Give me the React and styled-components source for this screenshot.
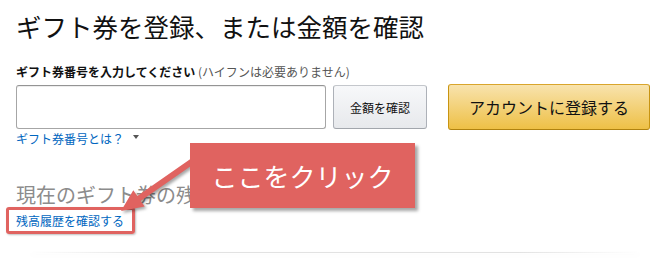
import React from "react";
import styled, { createGlobalStyle } from "styled-components";

const GlobalStyle = createGlobalStyle`
  html, body {
    margin: 0;
    padding: 0;
    background: #fff;
  }
  body {
    font-family: "Noto Sans CJK JP", "Noto Sans", sans-serif;
    color: #111;
  }
`;

export default function App() {
  return (
    <Page>
      <GlobalStyle />
      <Title>ギフト券を登録、または金額を確認</Title>
      <Label>
        <strong>ギフト券番号を入力してください</strong>
        <Hint> (ハイフンは必要ありません)</Hint>
      </Label>
      <FormRow>
        <CodeInput type="text" />
        <Button>金額を確認</Button>
        <PrimaryButton>アカウントに登録する</PrimaryButton>
      </FormRow>
      <HelpLink>
        ギフト券番号とは？<Caret />
      </HelpLink>
      <BalanceHeading>現在のギフト券の残高</BalanceHeading>
      <Highlight>
        <TextLink>残高履歴を確認する</TextLink>
      </Highlight>
      <Divider />

      <Arrow width="670" height="261" viewBox="0 0 670 261">
        <polygon points="201.7,158.5 140.7,200.9 144.7,206.6 121,211 133.3,190.2 137.3,195.9 198.3,153.5" />
      </Arrow>
      <Callout>ここをクリック</Callout>
    </Page>
  );
}

const Page = styled.div`
  position: relative;
  width: 670px;
  height: 261px;
  padding: 0 16px;
  box-sizing: border-box;
  overflow: hidden;
`;

const Title = styled.h1`
  margin: 0;
  padding-top: 11px;
  font-size: 25.5px;
  line-height: 30px;
  font-weight: 400;
  color: #111;
`;

const Label = styled.div`
  margin-top: 23px;
  font-size: 12px;
  line-height: 16px;
  color: #111;

  strong {
    font-weight: 700;
  }
`;

const Hint = styled.span`
  color: #555;
`;

const FormRow = styled.div`
  display: flex;
  align-items: center;
  margin-top: 4px;
  height: 46px;
`;

const CodeInput = styled.input`
  width: 310px;
  height: 44px;
  box-sizing: border-box;
  border: 1px solid #a6a6a6;
  border-top-color: #949494;
  border-radius: 3px;
  box-shadow: 0 1px 0 rgba(255, 255, 255, 0.5), 0 1px 0 rgba(0, 0, 0, 0.07) inset;
  outline: none;
`;

const Button = styled.button`
  margin-left: 7px;
  width: 94px;
  height: 44px;
  box-sizing: border-box;
  border: 1px solid #adb1b8;
  border-top-color: #c4c7cc;
  border-bottom-color: #a2a6ac;
  border-radius: 3px;
  background: linear-gradient(to bottom, #f7f8fa, #e7e9ec);
  font-family: inherit;
  font-size: 12px;
  color: #111;
`;

const PrimaryButton = styled.button`
  margin-left: 21px;
  width: 202px;
  height: 46px;
  box-sizing: border-box;
  border: 1px solid #c89411;
  border-top-color: #d9a52c;
  border-bottom-color: #b0820f;
  border-radius: 3px;
  background: linear-gradient(to bottom, #f8e3ad, #eec046);
  font-family: inherit;
  font-size: 16px;
  color: #111;
`;

const HelpLink = styled.div`
  margin-top: 1px;
  display: flex;
  align-items: center;
  font-size: 12px;
  line-height: 16px;
  color: #0066c0;
`;

const Caret = styled.span`
  display: inline-block;
  margin-left: 9px;
  margin-bottom: 4px;
  width: 0;
  height: 0;
  border-left: 3px solid transparent;
  border-right: 3px solid transparent;
  border-top: 4px solid #555;
`;

const BalanceHeading = styled.h2`
  margin: 36px 0 0;
  font-size: 20px;
  line-height: 24px;
  font-weight: 400;
  color: #8c8c8c;
`;

const Highlight = styled.div`
  display: inline-block;
  margin: -2px 0 0 -10px;
  padding: 3px 8px 2px 7px;
  border: 3px solid #e06360;
  border-radius: 3px;
  box-shadow: 1px 1px 2px rgba(0, 0, 0, 0.25);
`;

const TextLink = styled.span`
  display: block;
  font-size: 12px;
  line-height: 16px;
  color: #0066c0;
`;

const Divider = styled.div`
  margin: 18px 14px 0;
  height: 1px;
  background: linear-gradient(to right, rgba(220, 220, 220, 0), #e2e2e2 20%, #e2e2e2 80%, rgba(220, 220, 220, 0));
  box-shadow: 0 2px 5px rgba(0, 0, 0, 0.05);
`;

const Arrow = styled.svg`
  position: absolute;
  left: 0;
  top: 0;
  pointer-events: none;
  fill: #e06360;
  filter: drop-shadow(2px 2px 1.5px rgba(0, 0, 0, 0.35));
`;

const Callout = styled.div`
  position: absolute;
  left: 190px;
  top: 143px;
  width: 225px;
  height: 65px;
  display: flex;
  align-items: center;
  justify-content: center;
  background: #e06360;
  color: #fff;
  font-size: 26px;
  box-shadow: 3px 3px 3px rgba(0, 0, 0, 0.35);
`;
